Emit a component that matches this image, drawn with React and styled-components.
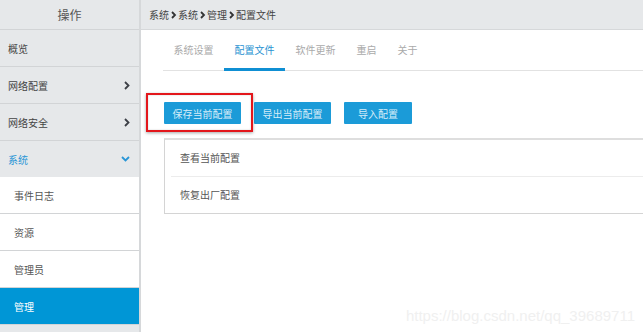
import styled, { createGlobalStyle } from "styled-components";

const GlobalStyle = createGlobalStyle`
  html, body {
    margin: 0;
    padding: 0;
    background: #fff;
    font-family: "Noto Sans CJK SC", "Noto Sans", sans-serif;
  }
`;

const Page = styled.div`
  display: flex;
  width: 643px;
  height: 332px;
  overflow: hidden;
  position: relative;
`;

const Sidebar = styled.div`
  width: 139px;
  flex-shrink: 0;
  background: #e6e8ea;
  border-right: 2px solid #d6d8da;
`;

const SideHeader = styled.div`
  height: 29px;
  line-height: 29px;
  text-align: center;
  font-size: 12px;
  color: #555;
  border-bottom: 1px solid #d2d4d6;
`;

const MenuItem = styled.div`
  display: flex;
  align-items: center;
  justify-content: space-between;
  height: 36px;
  padding: 0 9px 0 ${(p) => (p.$sub ? 14 : 8)}px;
  font-size: 10px;
  border-bottom: ${(p) => (p.$open ? "none" : "1px solid #d2d4d6")};
  color: ${(p) => (p.$active ? "#fff" : p.$open ? "#2a96d6" : p.$sub ? "#555" : "#444")};
  background: ${(p) => (p.$active ? "#0096d6" : p.$sub ? "#fff" : "transparent")};
`;

const Main = styled.div`
  flex: 1;
  min-width: 0;
  overflow: hidden;
`;

const Breadcrumb = styled.div`
  display: flex;
  align-items: center;
  gap: 1.5px;
  height: 29px;
  padding-left: 8px;
  background: #e6e8ea;
  border-bottom: 1px solid #d6d8da;
  font-size: 10px;
  color: #444;
`;

const Content = styled.div`
  padding-left: 22px;
`;

const Tabs = styled.div`
  display: flex;
  height: 40px;
  border-bottom: 1px solid #e2e2e2;
`;

const Tab = styled.div`
  padding: 0 10.5px;
  line-height: 40px;
  font-size: 10px;
  color: ${(p) => (p.$active ? "#2a93d2" : "#aaa")};
  border-bottom: 3px solid ${(p) => (p.$active ? "#0f8fd3" : "transparent")};
  margin-bottom: -1px;
  height: 38px;
  box-sizing: content-box;
`;

const Toolbar = styled.div`
  display: flex;
  gap: 13px;
  margin: 31px 0 14px 1px;
`;

const Marked = styled.div`
  position: relative;
`;

const Highlight = styled.div`
  position: absolute;
  left: -18px;
  top: -9px;
  right: -12px;
  bottom: -8px;
  border: 2px solid #e3161b;
  box-shadow: 0 1px 3px rgba(0, 0, 0, 0.35), inset 0 0 2px rgba(0, 0, 0, 0.2);
  pointer-events: none;
`;

const Button = styled.button`
  display: block;
  width: ${(p) => p.$w}px;
  height: 22px;
  padding: 0;
  border: none;
  border-radius: 1px;
  background: #1b9bd8;
  color: #d6edf8;
  font-family: inherit;
  font-size: 10px;
`;

const Panel = styled.div`
  margin: 0 -12px 0 1px;
  border: 1px solid #d4d4d4;
  border-top: 2px solid #dedede;
`;

const PanelRow = styled.div`
  height: 36px;
  line-height: 36px;
  padding-left: 15px;
  font-size: 10px;
  color: #555;
  & + & {
    border-top: 1px solid #ececec;
    margin-left: 6px;
    padding-left: 9px;
  }
`;

const Watermark = styled.div`
  position: absolute;
  right: 8px;
  bottom: 8px;
  font-family: "Liberation Sans", Arial, sans-serif;
  font-size: 15px;
  color: #f0f0f0;
  pointer-events: none;
`;

function Chevron({ down }) {
  return down ? (
    <svg width="9" height="6" viewBox="0 0 9 6">
      <polyline points="1,1 4.5,4.5 8,1" fill="none" stroke="#2a96d6" strokeWidth="1.8" />
    </svg>
  ) : (
    <svg width="6" height="9" viewBox="0 0 6 9">
      <polyline points="1,1 4.5,4.5 1,8" fill="none" stroke="#3c3f46" strokeWidth="1.8" />
    </svg>
  );
}

function Sep() {
  return (
    <svg width="6" height="8" viewBox="0 0 6 8">
      <polyline points="1,1 4,4 1,7" fill="none" stroke="#333" strokeWidth="1.8" />
    </svg>
  );
}

const menu = [
  { label: "概览" },
  { label: "网络配置", arrow: true },
  { label: "网络安全", arrow: true },
  { label: "系统", open: true },
];

const submenu = ["事件日志", "资源", "管理员", "管理"];
const tabs = ["系统设置", "配置文件", "软件更新", "重启", "关于"];
const crumbs = ["系统", "系统", "管理", "配置文件"];

export default function App() {
  return (
    <>
      <GlobalStyle />
      <Page>
        <Sidebar>
          <SideHeader>操作</SideHeader>
          {menu.map((m) => (
            <MenuItem key={m.label} $open={m.open}>
              <span>{m.label}</span>
              {m.arrow && <Chevron />}
              {m.open && <Chevron down />}
            </MenuItem>
          ))}
          {submenu.map((s) => (
            <MenuItem key={s} $sub $active={s === "管理"}>
              <span>{s}</span>
            </MenuItem>
          ))}
        </Sidebar>
        <Main>
          <Breadcrumb>
            {crumbs.map((c, i) => (
              <span key={i} style={{ display: "contents" }}>
                {i > 0 && <Sep />}
                <span>{c}</span>
              </span>
            ))}
          </Breadcrumb>
          <Content>
            <Tabs>
              {tabs.map((t) => (
                <Tab key={t} $active={t === "配置文件"}>
                  {t}
                </Tab>
              ))}
            </Tabs>
            <Toolbar>
              <Marked>
                <Button $w={77}>保存当前配置</Button>
                <Highlight />
              </Marked>
              <Button $w={77}>导出当前配置</Button>
              <Button $w={68}>导入配置</Button>
            </Toolbar>
            <Panel>
              <PanelRow>查看当前配置</PanelRow>
              <PanelRow>恢复出厂配置</PanelRow>
            </Panel>
          </Content>
        </Main>
        <Watermark>https://blog.csdn.net/qq_39689711</Watermark>
      </Page>
    </>
  );
}
